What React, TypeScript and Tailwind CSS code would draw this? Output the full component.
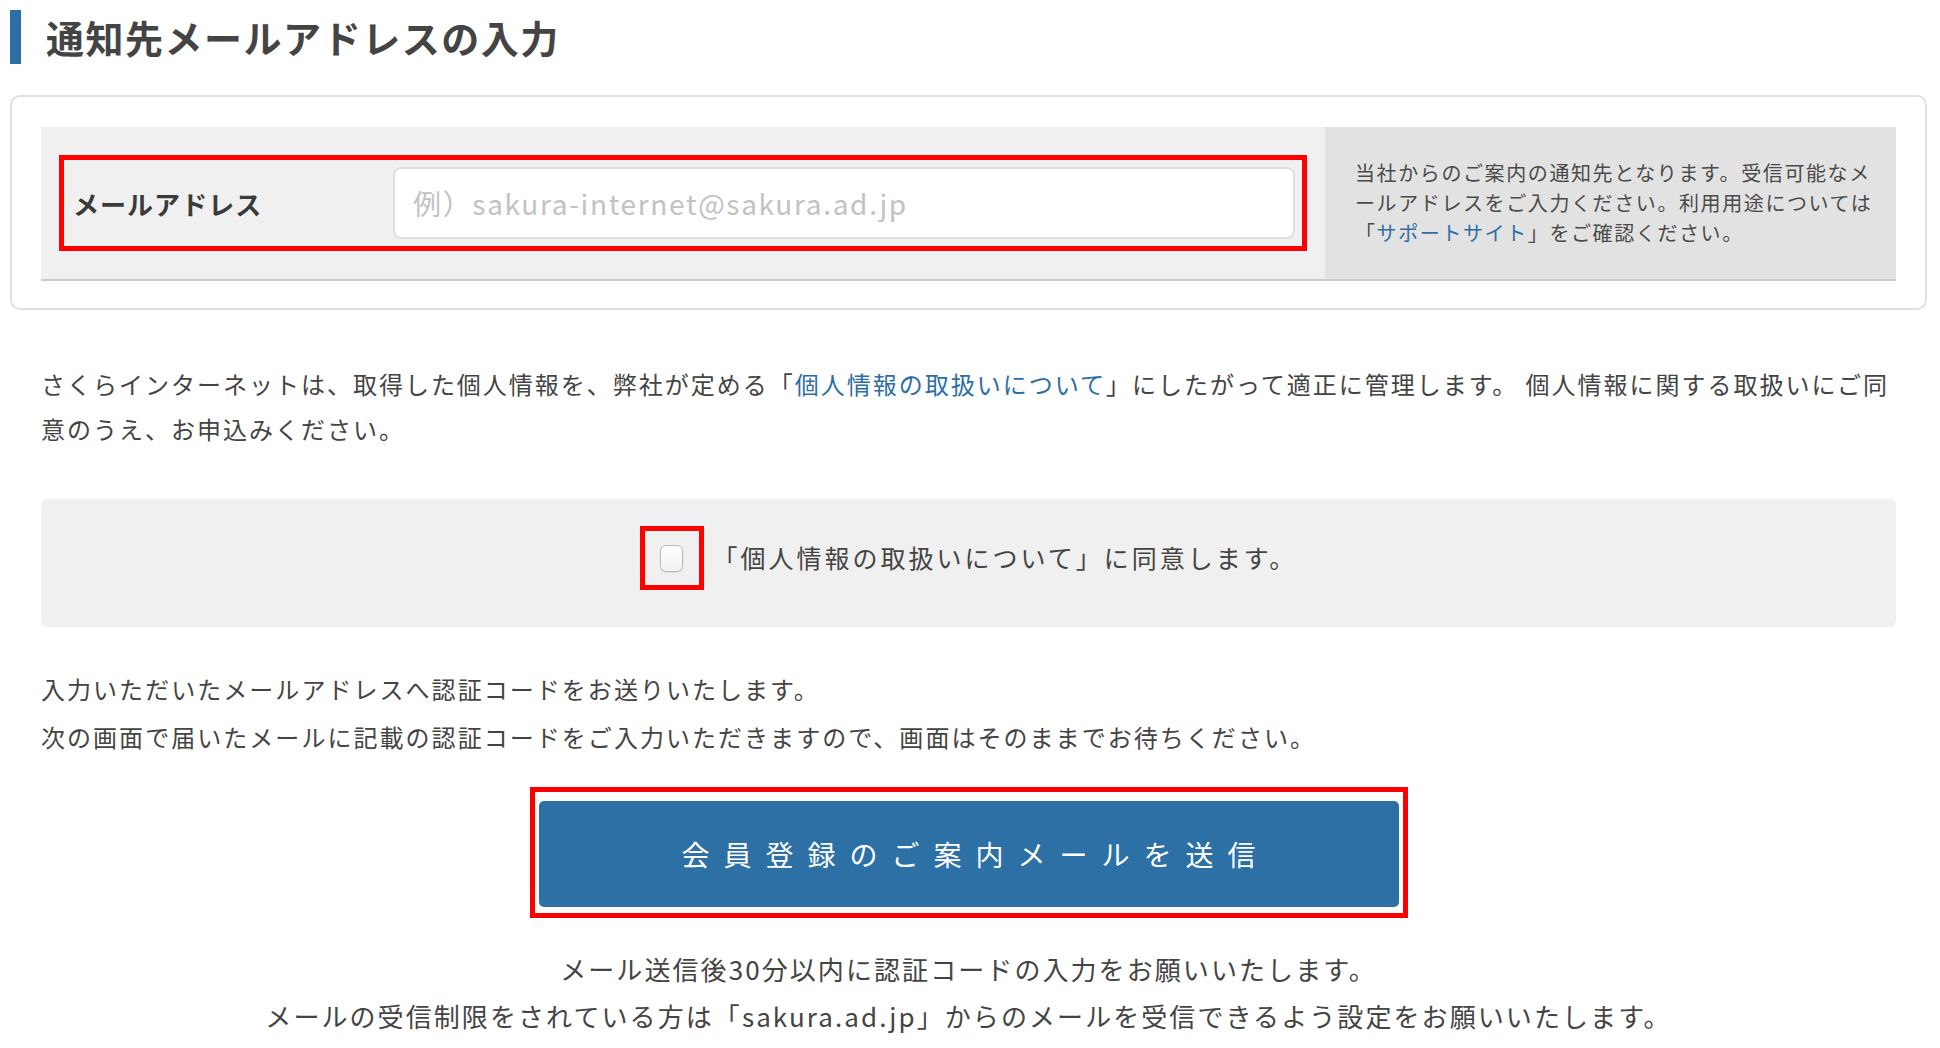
export default function App() {
  return (
    <div className="min-h-screen bg-white pl-[10px] pr-[13px] pt-[10px] font-['Noto_Sans_CJK_JP','Liberation_Sans',sans-serif] text-[#444] tracking-[0.07em]">
      {/* Heading */}
      <h1 className="flex h-[54px] items-center border-l-[11px] border-[#2c6ea5] pl-[25px] text-[38px] font-bold leading-none tracking-[0.04em] text-[#444]">
        通知先メールアドレスの入力
      </h1>

      {/* Form card */}
      <div className="mt-[31px] rounded-[10px] border-2 border-[#e0e0e0] px-[29px] pt-[30px] pb-[27px]">
        <div className="flex border-b-2 border-[#cccccc]">
          <div className="flex-1 bg-[#f0f0f0] px-[18px] py-[28px]">
            <div className="flex items-center border-[5px] border-[#ff0000] p-[7px]">
              <label className="w-[322px] shrink-0 pl-[2px] text-[26px] font-bold tracking-[0.04em] text-[#3a3a3a]">
                メールアドレス
              </label>
              <input
                type="email"
                placeholder="例）sakura-internet@sakura.ad.jp"
                className="h-[72px] flex-1 rounded-[8px] border-2 border-[#dedede] bg-white px-[18px] text-[28px] tracking-[0.06em] text-[#333] outline-none placeholder:text-[#c2c2c2]"
              />
            </div>
          </div>
          <div className="flex w-[571px] items-center bg-[#e2e2e2] pl-[30px] pr-[12px] text-[20px] leading-[30px] tracking-[0.08em] text-[#4a4a4a]">
            <p>
              当社からのご案内の通知先となります。受信可能なメールアドレスをご入力ください。利用用途については「
              <a className="text-[#2c6ea5]">サポートサイト</a>」をご確認ください。
            </p>
          </div>
        </div>
      </div>

      <div className="px-[31px]">
        {/* Privacy notice */}
        <p className="mt-[51px] text-[24px] leading-[45px] tracking-[0.083em]">
          さくらインターネットは、取得した個人情報を、弊社が定める「
          <a className="text-[#2c6ea5]">個人情報の取扱いについて</a>
          」にしたがって適正に管理します。 個人情報に関する取扱いにご同意のうえ、お申込みください。
        </p>

        {/* Agreement */}
        <div className="mt-[48px] flex h-[128px] items-center justify-center rounded-[6px] bg-[#f0f0f0] pb-[10px]">
          <div className="flex h-[64px] w-[64px] items-center justify-center border-[5px] border-[#ff0000]">
            <span className="block h-[27px] w-[23px] rounded-[6px] border border-[#b8b8b8] bg-gradient-to-b from-white to-[#f2f2f2] shadow-[0_1px_1px_rgba(0,0,0,0.08)]" />
          </div>
          <span className="ml-[9px] text-[25px] tracking-[0.12em] text-[#444]">
            「個人情報の取扱いについて」に同意します。
          </span>
        </div>

        {/* Code info */}
        <div className="mt-[38px] text-[24px] leading-[48px] tracking-[0.085em]">
          <p>入力いただいたメールアドレスへ認証コードをお送りいたします。</p>
          <p>次の画面で届いたメールに記載の認証コードをご入力いただきますので、画面はそのままでお待ちください。</p>
        </div>

        {/* Submit */}
        <div className="mt-[26px] flex justify-center">
          <div className="w-[878px] border-[5px] border-[#ff0000] px-[4px] pt-[9px] pb-[6px]">
            <button className="flex h-[106px] w-full items-center justify-center rounded-[5px] bg-[#2c70a5] pl-[14px] text-[28px] tracking-[0.5em] text-white">
              会員登録のご案内メールを送信
            </button>
          </div>
        </div>

        <div className="mt-[27px] text-center text-[26px] leading-[47px] tracking-[0.08em]">
          <p>メール送信後30分以内に認証コードの入力をお願いいたします。</p>
          <p>メールの受信制限をされている方は「sakura.ad.jp」からのメールを受信できるよう設定をお願いいたします。</p>
        </div>
      </div>
    </div>
  )
}
